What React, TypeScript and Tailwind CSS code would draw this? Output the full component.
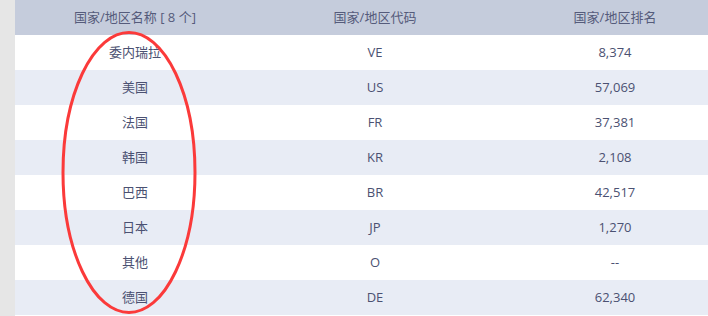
import React from "react";

const rows: [string, string, string][] = [
  ["委内瑞拉", "VE", "8,374"],
  ["美国", "US", "57,069"],
  ["法国", "FR", "37,381"],
  ["韩国", "KR", "2,108"],
  ["巴西", "BR", "42,517"],
  ["日本", "JP", "1,270"],
  ["其他", "O", "--"],
  ["德国", "DE", "62,340"],
];

export default function App() {
  return (
    <div
      className="relative flex w-[708px] h-[316px] overflow-hidden bg-white text-[13px] text-[#4b5172]"
      style={{ fontFamily: '"Segoe UI", "Open Sans", "Noto Sans CJK SC", sans-serif' }}
    >
      <div className="w-[15px] shrink-0 bg-[#e6e6e6]" />
      <div className="w-[720px] shrink-0 flex flex-col">
        <div className="grid grid-cols-[240px_240px_240px] h-[35px] bg-[#c5ccdc] text-[#555b7b]">
          <div className="flex items-center justify-center">国家/地区名称 [ 8 个]</div>
          <div className="flex items-center justify-center">国家/地区代码</div>
          <div className="flex items-center justify-center">国家/地区排名</div>
        </div>
        {rows.map((r, i) => (
          <div
            key={i}
            className={
              "grid grid-cols-[240px_240px_240px] h-[35px] " +
              (i % 2 === 0 ? "bg-white" : "bg-[#e8ecf5]")
            }
          >
            <div className="flex items-center justify-center">{r[0]}</div>
            <div className="flex items-center justify-center">{r[1]}</div>
            <div className="flex items-center justify-center">{r[2]}</div>
          </div>
        ))}
      </div>
      <svg className="absolute left-0 top-0 pointer-events-none" width="708" height="316">
        <ellipse cx="129" cy="172.5" rx="66" ry="140" fill="none" stroke="#fb3a3a" strokeWidth="3" />
      </svg>
    </div>
  );
}
